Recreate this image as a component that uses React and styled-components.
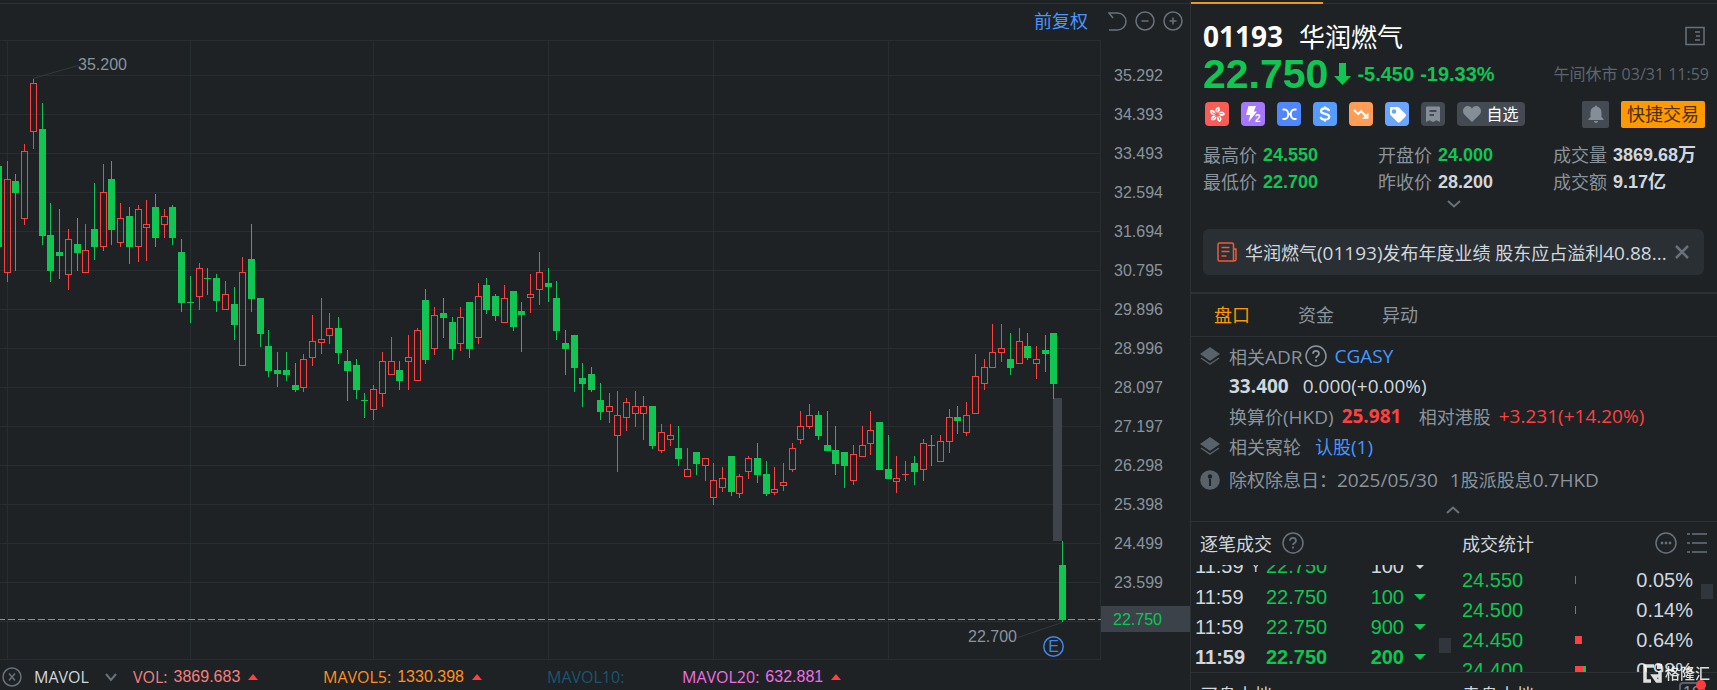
import React from 'react';
import styled, { createGlobalStyle } from 'styled-components';

const UP = '#ff4040';
const DOWN = '#10c551';
const LINE = '#2d3236';
const CJK = `'Open Sans', 'Noto Sans CJK SC', sans-serif`;
const NUM = `'Liberation Sans', 'Noto Sans CJK SC', sans-serif`;

const GlobalStyle = createGlobalStyle`
    * { box-sizing: border-box; }
    body {
        margin: 0;
        background: #1e2224;
        color: #d0d7df;
        font-family: ${CJK};
        font-size: 18px;
        overflow: hidden;
    }
    button, select { font: inherit; color: inherit; background: none; border: 0; padding: 0; margin: 0; cursor: pointer; }
    a { color: #4896ff; text-decoration: none; }
    svg { display: block; flex: none; }
`;

// x, high, body top, body bottom, low, u(p) / d(own)
const candles = [
    [-2, 166, 166, 247, 247, 'd'], [7, 161, 179, 273, 282, 'u'], [15, 174, 181, 193, 271, 'd'],
    [24, 144, 151, 219, 225, 'u'], [33, 79, 83, 132, 149, 'u'], [42, 103, 129, 236, 245, 'd'],
    [50, 203, 235, 271, 282, 'd'], [59, 209, 252, 256, 279, 'd'], [68, 229, 239, 275, 290, 'u'],
    [77, 218, 244, 253, 271, 'd'], [85, 224, 250, 273, 273, 'u'], [94, 183, 229, 247, 260, 'd'],
    [103, 164, 192, 247, 251, 'u'], [111, 161, 179, 230, 245, 'd'], [120, 203, 218, 243, 247, 'u'],
    [129, 207, 216, 247, 264, 'd'], [138, 205, 209, 247, 262, 'u'], [146, 200, 224, 228, 261, 'u'],
    [155, 194, 207, 238, 247, 'd'], [164, 209, 216, 225, 238, 'u'], [172, 205, 207, 238, 245, 'd'],
    [181, 239, 252, 303, 312, 'd'], [190, 276, 302, 303, 323, 'd'], [199, 263, 268, 297, 310, 'u'],
    [207, 268, 278, 279, 295, 'd'], [216, 274, 278, 301, 312, 'd'], [225, 281, 294, 310, 310, 'u'],
    [234, 287, 304, 325, 340, 'd'], [242, 257, 272, 366, 366, 'u'], [251, 224, 259, 299, 312, 'd'],
    [260, 298, 298, 334, 347, 'd'], [268, 330, 346, 371, 377, 'd'], [277, 352, 370, 374, 387, 'd'],
    [286, 352, 370, 375, 381, 'd'], [295, 363, 385, 390, 392, 'd'], [303, 354, 359, 388, 392, 'u'],
    [312, 315, 341, 358, 366, 'u'], [321, 298, 339, 343, 354, 'u'], [329, 313, 328, 336, 344, 'u'],
    [338, 317, 328, 353, 364, 'd'], [347, 350, 361, 371, 401, 'd'], [356, 359, 365, 390, 399, 'd'],
    [364, 393, 400, 401, 418, 'd'], [373, 385, 389, 410, 420, 'u'], [382, 352, 361, 394, 407, 'u'],
    [391, 337, 361, 375, 375, 'u'], [399, 361, 370, 381, 390, 'd'], [408, 335, 357, 362, 390, 'u'],
    [417, 328, 330, 381, 381, 'u'], [425, 289, 300, 360, 364, 'd'], [434, 307, 315, 349, 355, 'u'],
    [443, 298, 313, 318, 338, 'd'], [452, 317, 322, 349, 360, 'd'], [460, 307, 317, 344, 351, 'u'],
    [469, 302, 302, 349, 358, 'd'], [478, 283, 296, 338, 344, 'u'], [486, 278, 285, 310, 314, 'd'],
    [495, 294, 296, 316, 321, 'd'], [504, 285, 298, 323, 323, 'u'], [513, 291, 291, 327, 331, 'd'],
    [521, 302, 311, 315, 352, 'd'], [530, 274, 294, 298, 313, 'u'], [539, 252, 272, 290, 305, 'u'],
    [548, 268, 283, 287, 302, 'd'], [556, 281, 298, 331, 340, 'd'], [565, 330, 343, 349, 375, 'd'],
    [574, 335, 335, 368, 392, 'd'], [582, 363, 378, 384, 407, 'd'], [591, 367, 374, 390, 392, 'd'],
    [600, 383, 400, 412, 420, 'd'], [609, 393, 406, 412, 423, 'u'], [617, 391, 415, 436, 472, 'u'],
    [626, 398, 402, 418, 431, 'u'], [635, 391, 406, 414, 427, 'u'], [643, 396, 406, 414, 440, 'u'],
    [652, 406, 406, 446, 449, 'd'], [661, 424, 432, 451, 453, 'u'], [670, 424, 435, 440, 446, 'u'],
    [678, 426, 448, 459, 466, 'd'], [687, 448, 469, 477, 477, 'u'], [696, 452, 452, 464, 475, 'd'],
    [705, 458, 458, 466, 481, 'u'], [713, 463, 480, 498, 505, 'u'], [722, 467, 478, 488, 492, 'u'],
    [731, 456, 456, 492, 496, 'd'], [739, 474, 476, 494, 498, 'u'], [748, 456, 458, 472, 479, 'u'],
    [757, 443, 458, 475, 483, 'd'], [766, 461, 474, 494, 496, 'd'], [774, 467, 489, 493, 495, 'u'],
    [783, 463, 482, 486, 491, 'u'], [792, 443, 448, 470, 472, 'u'], [800, 411, 426, 440, 444, 'u'],
    [809, 404, 415, 427, 429, 'u'], [818, 411, 415, 436, 440, 'd'], [827, 411, 445, 451, 451, 'd'],
    [835, 426, 450, 464, 475, 'd'], [844, 452, 452, 466, 488, 'd'], [853, 445, 454, 481, 485, 'u'],
    [862, 426, 445, 457, 457, 'u'], [870, 411, 430, 444, 455, 'u'], [879, 422, 422, 470, 470, 'd'],
    [888, 435, 469, 479, 479, 'd'], [896, 456, 478, 482, 493, 'u'], [905, 461, 474, 475, 481, 'u'],
    [914, 456, 463, 472, 485, 'd'], [923, 439, 443, 470, 481, 'u'], [931, 435, 445, 446, 466, 'd'],
    [940, 435, 441, 462, 462, 'u'], [949, 409, 417, 442, 453, 'u'], [957, 406, 417, 421, 434, 'd'],
    [966, 402, 415, 433, 436, 'u'], [975, 354, 376, 414, 414, 'u'], [984, 359, 367, 384, 390, 'u'],
    [992, 324, 352, 368, 368, 'u'], [1001, 324, 348, 353, 362, 'u'], [1010, 333, 359, 368, 375, 'd'],
    [1019, 328, 341, 364, 364, 'u'], [1027, 333, 346, 358, 360, 'd'], [1036, 346, 359, 364, 379, 'u'],
    [1045, 335, 350, 354, 372, 'd'], [1053, 333, 333, 384, 399, 'd'], [1062, 541, 565, 620, 622, 'd'],
];

const axisPrices = [
    '35.292', '34.393', '33.493', '32.594', '31.694', '30.795', '29.896',
    '28.996', '28.097', '27.197', '26.298', '25.398', '24.499', '23.599',
];

const volumes = [
    { name: 'VOL:', value: '3869.683', color: '#f57f7f', width: 190 },
    { name: 'MAVOL5:', value: '1330.398', color: '#ff8f1f', width: 224 },
    { name: 'MAVOL10:', value: '', color: '#1b5570', width: 135 },
    { name: 'MAVOL20:', value: '632.881', color: '#ee6fe4', width: 190 },
];

const quotes = [
    { label: '最高价', value: '24.550', color: DOWN },
    { label: '开盘价', value: '24.000', color: DOWN },
    { label: '成交量', value: '3869.68万' },
    { label: '最低价', value: '22.700', color: DOWN },
    { label: '昨收价', value: '28.200' },
    { label: '成交额', value: '9.17亿' },
];

const ticks = [
    { time: '11:59', flag: 'Y', price: '22.750', size: '100', color: '#d0d7df' },
    { time: '11:59', price: '22.750', size: '100', color: DOWN },
    { time: '11:59', price: '22.750', size: '900', color: DOWN },
    { time: '11:59', price: '22.750', size: '200', color: DOWN, bold: true },
];

const levels = [
    { price: '24.550', parts: [[1, '#6b737c']], percent: '0.05%' },
    { price: '24.500', parts: [[1, UP]], percent: '0.14%' },
    { price: '24.450', parts: [[6, UP], [1, '#6b737c']], percent: '0.64%' },
    { price: '24.400', parts: [[8, UP], [3, DOWN]], percent: '0.98%' },
];

/* ---------- layout ---------- */

const Page = styled.div`
    display: grid;
    grid-template-columns: minmax(0, 1fr) 527px;
    height: 100vh;
    min-height: 0;
`;

const ChartPane = styled.main`
    display: flex;
    flex-direction: column;
    min-width: 0;
    min-height: 0;
    padding-top: 3px;
`;

const SidePane = styled.aside`
    display: flex;
    flex-direction: column;
    min-height: 0;
    overflow: hidden;
    border-left: 1px solid ${LINE};
`;

/* ---------- chart ---------- */

const Toolbar = styled.div`
    display: flex;
    flex: none;
    align-items: center;
    justify-content: flex-end;
    gap: 8px;
    height: 37px;
    padding: 0 7px 2px 0;
    border-top: 1px solid ${LINE};
    color: #69717b;
`;

const AdjustButton = styled.button`
    margin-right: 11px;
    padding-bottom: 2px;
    color: #4896ff;
`;

const ChartRow = styled.div`
    display: flex;
    flex: 1;
    min-height: 0;
`;

const Plot = styled.svg`
    flex: 1;
    min-width: 0;
    height: 100%;
    font-family: ${NUM};
    font-size: 16px;
`;

const Axis = styled.div`
    flex: none;
    width: 89px;
    padding-top: 16px;
    font: 16px/39px ${NUM};
    color: #8b939c;
`;

const AxisLabel = styled.div`
    padding-left: 13px;
`;

const LastPrice = styled.div`
    height: 26px;
    margin-top: 4px;
    padding-left: 12px;
    line-height: 28px;
    color: ${DOWN};
    background: #3b424a;
`;

const VolumeBar = styled.div`
    display: flex;
    flex: none;
    align-items: center;
    height: 30px;
    padding: 4px 0 0 2px;
    font-size: 16px;
    line-height: 24px;
    color: #69717b;
`;

const SelectBox = styled.label`
    position: relative;
    width: 99px;
    margin-left: 12px;

    select {
        width: 84px;
        appearance: none;
        color: #d0d7df;
    }

    svg {
        position: absolute;
        right: 16px;
        top: 6px;
        pointer-events: none;
    }
`;

const VolumeItem = styled.div`
    display: flex;
    align-items: center;
    gap: 6px;
    width: ${({ $width }) => $width}px;
    color: ${({ $color }) => $color};
`;

const VolumeValue = styled.span`
    margin-right: 2px;
    font-family: ${NUM};
`;

const Grid = () => (
    <g stroke="#282d30" shapeRendering="crispEdges">
        <path d="M0 40.5H1101" />
        {axisPrices.map((price, i) => <path d={`M0 ${75.5 + i * 39}H1101`} key={price} />)}
        <path d="M0 621.5H1101M0 659.5H1101" />
        {[7, 190, 373, 548, 713, 888, 1100].map(x => <path d={`M${x + 0.5} 40V660`} key={x} />)}
    </g>
);

const Candle = ({ candle }) => {
    const [x, high, top, bottom, low, dir] = candle;
    const color = dir === 'u' ? UP : DOWN;
    const hollow = dir === 'u' && bottom - top > 1;

    return (
        <g fill={color}>
            {top > high && <rect x={x} y={high} width="1" height={top - high} />}
            {low > bottom && <rect x={x} y={bottom} width="1" height={low - bottom} />}
            {hollow
                ? <rect x={x - 2.5} y={top + 0.5} width="6" height={bottom - top - 1} fill="none" stroke={color} />
                : <rect x={x - 3} y={top} width="7" height={bottom - top} />}
        </g>
    );
};

const CandleChart = () => (
    <Plot viewBox="0 40 1101 620" preserveAspectRatio="xMaxYMin slice" role="img" aria-label="K线图">
        <Grid />
        <rect x="1053" y="398" width="9" height="143" fill="#3f434b" />
        <path d="M-2 619.5H1101" stroke="#ab8a5c" strokeDasharray="7 3" />
        {candles.map(candle => <Candle candle={candle} key={candle[0]} />)}
        <path d="M33 78.5L78 65.5M1018 637.5L1062 622.5" stroke="#33383c" />
        <text x="78" y="70" fill="#8b939c">35.200</text>
        <text x="968" y="642" fill="#8b939c">22.700</text>
        <circle cx="1053.5" cy="646.5" r="9.75" fill="none" stroke="#3f86e6" strokeWidth="1.5" />
        <text x="1053.5" y="652" fill="#3f86e6" textAnchor="middle">E</text>
    </Plot>
);

/* ---------- icons ---------- */

const LineIcon = ({ size = 20, box = 20, width = 1.5, children }) => (
    <svg width={size} height={size} viewBox={`0 0 ${box} ${box}`} fill="none" stroke="currentColor" strokeWidth={width}>
        {children}
    </svg>
);

const UndoIcon = () => (
    <LineIcon>
        <path d="M6 7L2 2h8.500a8.500 8.500 0 0 1 0 17H2" />
    </LineIcon>
);

const MinusIcon = () => (
    <LineIcon><circle cx="10" cy="10" r="9" /><path d="M6.500 10h7" /></LineIcon>
);

const PlusIcon = () => (
    <LineIcon><circle cx="10" cy="10" r="9" /><path d="M6.500 10h7M10 6.500v7" /></LineIcon>
);

const CloseCircleIcon = () => (
    <LineIcon><circle cx="10" cy="10" r="9" /><path d="M7 6.500l6 7M13 6.500l-6 7" /></LineIcon>
);

const HelpIcon = () => (
    <LineIcon size={22} box={22}>
        <circle cx="11" cy="11" r="10" />
        <path d="M8 8.800c0-4 6-4 6 0 0 2.200-3 2-3 4.200M11 14.500v2" strokeWidth="1.800" />
    </LineIcon>
);

const Chevron = ({ up }) => (
    <svg width="14" height="8" viewBox="0 0 14 8" fill="none" stroke="#69717b" strokeWidth="2">
        <path d={up ? 'M1 7l6-5.500L13 7' : 'M1 1l6 5.500L13 1'} />
    </svg>
);

const Triangle = ({ up, color }) => (
    <svg width={up ? 10 : 12} height="6" viewBox="0 0 12 6" preserveAspectRatio="none" fill={color}>
        <path d={up ? 'M0 6L6 0l6 6z' : 'M0 0h12L6 6z'} />
    </svg>
);

const LayersIcon = () => (
    <svg width="20" height="20" viewBox="0 0 20 20" fill="#59616a">
        <path d="M10 1l10 7-10 7L0 8z" />
        <path d="M1 12l9 6 9-6" fill="none" stroke="#59616a" strokeWidth="1.500" />
    </svg>
);

const InfoIcon = () => (
    <svg width="20" height="20" viewBox="0 0 20 20">
        <circle cx="10" cy="10" r="9.800" fill="#59616a" />
        <circle cx="10" cy="6.500" r="2.200" fill="#1e2224" />
        <path d="M10 9v7" stroke="#1e2224" strokeWidth="2" />
    </svg>
);

const BauhiniaIcon = () => (
    <svg width="24" height="24" viewBox="0 0 24 24" fill="#fff">
        {[0, 72, 144, 216, 288].map(angle => (
            <g transform={`rotate(${angle + 8} 12 12.500)`} key={angle}>
                <path d="M12 10.800C8.200 9.500 9.500 5.500 12.800 4.500 15.200 7 14.500 9.500 12 10.800z" />
                <path d="M12 10.500c-.8-1.500-.6-2.800.4-3.900" fill="none" stroke="#f95c57" strokeWidth=".8" />
            </g>
        ))}
    </svg>
);

const LevelTwoIcon = () => (
    <svg width="24" height="24" viewBox="0 0 24 24" fill="#fff">
        <path d="M7.500 4h7.500l-2.200 5.500H16L7.500 20l1.700-7H5z" />
        <text x="14" y="20" fontFamily="Liberation Sans, sans-serif" fontWeight="bold" fontSize="10">2</text>
    </svg>
);

const ShuffleIcon = () => (
    <LineIcon size={24} box={24} width={2}>
        <path d="M5.500 7.500h2c5 0 5 9.500 0 9.500h-2M19.500 7.500h-2c-5 0-5 9.500 0 9.500h2" />
        <path d="M11 12.200h3" />
    </LineIcon>
);

const DollarIcon = () => (
    <LineIcon size={24} box={24} width={2.2}>
        <path d="M16 9.200C15.500 5.500 8 5.500 8 9.200c0 3.600 8.300 1.800 8.300 5.600 0 3.800-8.300 3.600-8.600 0M12 4.500V7M12 17v2.500" />
    </LineIcon>
);

const TrendIcon = () => (
    <LineIcon size={24} box={24} width={2.2}>
        <path d="M5 8l4.200 4 3-2.800 5.300 5.500" />
        <path d="M19.500 10.500v6.200h-6.500z" fill="currentColor" stroke="none" />
    </LineIcon>
);

const TagIcon = () => (
    <svg width="24" height="24" viewBox="0 0 24 24" fill="#fff" fillRule="evenodd">
        <path d="M6 5h6.500c.7 0 1.200.2 1.700.7l6.300 6.300c.8.8.8 1.600 0 2.400L15 20c-.8.800-1.800.8-2.600 0L5.700 13.300c-.5-.5-.7-1-.7-1.700V6c0-.6.400-1 1-1zM9 7.200a2.300 2.300 0 1 0 0 4.600 2.300 2.300 0 0 0 0-4.600z" />
    </svg>
);

const NoteIcon = () => (
    <svg width="24" height="24" viewBox="0 0 24 24" fill="#858d96">
        <path d="M6 4.500h12a1 1 0 0 1 1 1V20l-3.500-1.800L12 20l-3.500-1.800L5 20V5.500a1 1 0 0 1 1-1z" />
        <path d="M8.500 9h7M8.500 13h4.500" stroke="#434a52" strokeWidth="1.800" />
    </svg>
);

const HeartIcon = () => (
    <svg width="18" height="16" viewBox="0 0 18 16" fill="#858d96">
        <path d="M9 16L1.500 8.800C-1.800 4.800 1 0 4.800 0 6.700 0 8.200 1 9 2.500 9.800 1 11.300 0 13.200 0 17 0 19.800 4.800 16.500 8.800z" />
    </svg>
);

const BellIcon = () => (
    <svg width="16" height="18" viewBox="0 0 16 18" fill="#858d96">
        <path d="M8 0l1.200 1.800C12 2.500 13.500 4.500 13.500 7.500V12l2 2v1H.5v-1l2-2V7.500c0-3 1.500-5 4.300-5.700zM5.800 16h4.400c-.4 1.300-1.200 2-2.200 2s-1.800-.7-2.200-2z" />
    </svg>
);

const PanelIcon = () => (
    <LineIcon>
        <rect x="1" y="1.500" width="18" height="17" />
        <path d="M10 6h5M11 10h4M10 14h5" />
    </LineIcon>
);

const NewsIcon = () => (
    <svg width="20" height="20" viewBox="0 0 20 20" fill="none" stroke="#f0593a" strokeWidth="1.500">
        <path d="M16.500 19H2.500A1.500 1.500 0 0 1 1 17.500v-15A1.500 1.500 0 0 1 2.500 1h12.500A1.500 1.500 0 0 1 16.500 2.500V19zM16.500 7H19v10.500a1.200 1.200 0 0 1-2.500 0M4.500 5.500h8M4.500 9.500h8M4.500 14h5" />
    </svg>
);

const MoreIcon = () => (
    <LineIcon size={22} box={22}>
        <circle cx="11" cy="11" r="10" />
        <path d="M5.800 11h2.400M9.800 11h2.400M13.800 11h2.400" strokeWidth="2.400" />
    </LineIcon>
);

const ListIcon = () => (
    <LineIcon>
        <path d="M0 1h3M5 1h15M0 10h3M5 10h15M0 19h3M5 19h15" />
    </LineIcon>
);

/* ---------- quote header ---------- */

const TabStrip = styled.div`
    flex: none;
    height: 4px;
    border-bottom: 1px solid ${LINE};

    &::before {
        content: '';
        display: block;
        width: 132px;
        height: 4px;
        background: linear-gradient(transparent 50%, #ee9a16 50%);
    }
`;

const QuoteHead = styled.section`
    flex: none;
    padding: 14px 12px 0 12px;
`;

const Row = styled.div`
    display: flex;
    align-items: center;
    justify-content: space-between;
`;

const TitleRow = styled(Row)`
    height: 36px;
`;

const Title = styled.h1`
    display: flex;
    align-items: baseline;
    gap: 16px;
    margin: 0;
    font-size: 26px;
    font-weight: 400;
    line-height: 36px;
    color: #fff;

    strong { font-size: 28px; }
`;

const IconButton = styled.button`
    display: flex;
    color: #69717b;
`;

const PriceRow = styled(Row)`
    height: 40px;
    font-family: ${NUM};
    font-weight: bold;
    font-size: 20px;
    color: ${DOWN};
`;

const PriceGroup = styled.div`
    display: flex;
    align-items: center;
    gap: 6px;
`;

const BigPrice = styled.span`
    font-size: 41px;
    line-height: 40px;
`;

const MarketTime = styled.span`
    margin-right: -4px;
    font: 16px/24px ${CJK};
    white-space: pre;
    color: #5d656f;
`;

const BadgeRow = styled(Row)`
    height: 28px;
    margin-top: 6px;
    padding-left: 2px;
`;

const Badges = styled.div`
    display: flex;
    gap: 12px;
`;

const Badge = styled.button`
    display: flex;
    width: 24px;
    height: 24px;
    border-radius: 4px;
    color: #fff;
    background: ${({ $bg }) => $bg};
`;

const FollowButton = styled.button`
    display: flex;
    align-items: center;
    justify-content: center;
    gap: 5px;
    width: 68px;
    height: 24px;
    border-radius: 4px;
    font-size: 16px;
    line-height: 24px;
    color: #fff;
    background: #434a52;
`;

const BellButton = styled.button`
    display: grid;
    place-items: center;
    width: 27px;
    height: 27px;
    border-radius: 2px;
    background: #434a52;
`;

const TradeButton = styled.button`
    width: 84px;
    height: 27px;
    border-radius: 2px;
    line-height: 27px;
    color: #4a3007;
    background: #ff9900;
`;

const QuoteGrid = styled.dl`
    display: grid;
    grid-template-columns: 175px 175px 1fr;
    margin: 14px 0 0;
    line-height: 27px;

    div {
        display: flex;
        gap: 6px;
        height: 27px;
        white-space: nowrap;
    }
    dt { color: #8b939c; }
    dd { margin: 0; font-family: ${NUM}; font-weight: bold; }
`;

const QuoteValue = styled.dd`
    color: ${({ $color }) => $color || '#d0d7df'};
`;

const ToggleRow = styled.button`
    display: flex;
    flex: none;
    align-items: center;
    justify-content: center;
    width: 100%;
    height: ${({ $height }) => $height}px;
`;

const News = styled.div`
    display: flex;
    align-items: center;
    gap: 8px;
    height: 46px;
    margin: 18px 1px 17px 0;
    padding: 0 15px 0 14px;
    border-radius: 6px;
    background: #2a2f33;

    a {
        flex: 1;
        min-width: 0;
        overflow: hidden;
        text-overflow: ellipsis;
        white-space: nowrap;
        color: #d0d7df;
    }
`;

/* ---------- order book ---------- */

const Tabs = styled.nav`
    display: flex;
    flex: none;
    gap: 48px;
    height: 45px;
    padding-left: 23px;
    border-top: 2px solid ${LINE};
    border-bottom: 1px solid ${LINE};
`;

const Tab = styled.button`
    width: 36px;
    padding-bottom: 3px;
    white-space: nowrap;
    color: ${({ $active }) => ($active ? '#ff9900' : '#8b939c')};
`;

const Related = styled.section`
    flex: none;
    padding: 4px 11px 0 9px;
    color: #8b939c;
`;

const RelatedRow = styled.div`
    display: grid;
    grid-template-columns: 29px 1fr;
    align-items: center;
    height: ${({ $tall }) => ($tall ? 37 : 30)}px;
`;

const RelatedText = styled.div`
    display: flex;
    grid-column: 2;
    align-items: center;
    gap: ${({ $gap }) => $gap}px;
    white-space: pre;
`;

const Figure = styled.span`
    font-size: 19px;
    font-weight: ${({ $bold }) => ($bold ? 700 : 400)};
    color: ${({ $color }) => $color || 'inherit'};
`;

/* ---------- trades ---------- */

const Trades = styled.section`
    display: grid;
    flex: none;
    grid-template-columns: 262px 1fr;
    border-top: 1px solid ${LINE};
    border-bottom: 1px solid ${LINE};
`;

const TradeTitle = styled.div`
    display: flex;
    align-items: center;
    gap: 10px;
    height: 43px;
    padding: 0 10px 1px 9px;

    h2 {
        flex: ${({ $grow }) => ($grow ? 1 : 'none')};
        margin: 0;
        font-size: 18px;
        font-weight: 400;
    }
`;

const Viewport = styled.div`
    display: flex;
    align-items: ${({ $end }) => ($end ? 'flex-end' : 'flex-start')};
    height: 107px;
    overflow: hidden;
`;

const Table = styled.table`
    flex: none;
    border-collapse: collapse;
    table-layout: fixed;
    font: 20px/30px ${NUM};

    td { height: 30px; padding: 0; }
`;

const TickTable = styled(Table)`
    width: 236px;
    margin-left: 4px;
`;

const TickRow = styled.tr`
    font-weight: ${({ $bold }) => ($bold ? 700 : 400)};
`;

const Cell = styled.td`
    width: ${({ $width }) => $width}px;
    text-align: ${({ $align }) => $align || 'left'};
    color: ${({ $color }) => $color || 'inherit'};

    small { font-size: 14px; }
    svg { margin-left: 10px; }
`;

const LevelTable = styled(Table)`
    width: 231px;
    margin-left: 9px;
`;

const Bar = styled.div`
    display: flex;

    i { height: 8px; }
`;

const Thumb = styled.div`
    align-self: flex-start;
    width: 12px;
    height: 15px;
    margin: ${({ $top }) => $top}px 0 0 8px;
    background: #31363d;
`;

const Book = styled.section`
    display: grid;
    flex: none;
    grid-template-columns: 262px 1fr;
    padding-top: 7px;

    h2 {
        margin: 0;
        padding-left: 9px;
        font-size: 18px;
        font-weight: 400;
        line-height: 30px;
    }
`;

const BookHead = styled.div`
    position: relative;
`;

const DepthButton = styled.button`
    position: absolute;
    right: 12px;
    top: 2px;
    width: 26px;
    height: 22px;
    border: 2px solid #59616a;
    border-radius: 4px;
    font: 16px/18px ${NUM};
    color: #8b939c;

    &::after {
        content: '';
        position: absolute;
        right: -3px;
        top: -4px;
        width: 10px;
        height: 10px;
        border-radius: 50%;
        background: #ff3b3b;
    }
`;

const Watermark = styled.div`
    position: fixed;
    right: 7px;
    bottom: 5px;
    display: flex;
    align-items: center;
    gap: 3px;
    font-size: 15px;
    font-weight: 500;
    line-height: 24px;
    color: #fff;
    opacity: 0.85;
`;

const badges = [
    { name: '港股', bg: '#f95c57', Icon: BauhiniaIcon },
    { name: 'Level 2', bg: '#a578fb', Icon: LevelTwoIcon },
    { name: '关联', bg: '#5087ff', Icon: ShuffleIcon },
    { name: '融资', bg: '#569bff', Icon: DollarIcon },
    { name: '沽空', bg: '#ff9c56', Icon: TrendIcon },
    { name: '标签', bg: '#6aa6ff', Icon: TagIcon },
    { name: '笔记', bg: '#434a52', Icon: NoteIcon },
];

const Header = () => (
    <QuoteHead>
        <TitleRow>
            <Title><strong>01193</strong>华润燃气</Title>
            <IconButton aria-label="面板"><PanelIcon /></IconButton>
        </TitleRow>
        <PriceRow>
            <PriceGroup>
                <BigPrice>22.750</BigPrice>
                <svg width="17" height="22" viewBox="0 0 17 22" fill={DOWN}>
                    <path d="M5 0h7v13h5l-8.500 9L0 13h5z" />
                </svg>
                <span>-5.450</span>
                <span>-19.33%</span>
            </PriceGroup>
            <MarketTime>午间休市 03/31 11:59</MarketTime>
        </PriceRow>
        <BadgeRow>
            <Badges>
                {badges.map(({ name, bg, Icon }) => (
                    <Badge $bg={bg} aria-label={name} key={name}><Icon /></Badge>
                ))}
                <FollowButton><HeartIcon />自选</FollowButton>
            </Badges>
            <Badges>
                <BellButton aria-label="提醒"><BellIcon /></BellButton>
                <TradeButton>快捷交易</TradeButton>
            </Badges>
        </BadgeRow>
        <QuoteGrid>
            {quotes.map(({ label, value, color }) => (
                <div key={label}>
                    <dt>{label}</dt>
                    <QuoteValue $color={color}>{value}</QuoteValue>
                </div>
            ))}
        </QuoteGrid>
        <ToggleRow $height={15} aria-label="展开"><Chevron /></ToggleRow>
        <News>
            <NewsIcon />
            <a href="#news">
                华润燃气<Figure>(01193)</Figure>发布年度业绩 股东应占溢利<Figure>40.88...</Figure>
            </a>
            <IconButton aria-label="关闭">
                <LineIcon size={14} box={14} width={2.5}><path d="M1 1l12 12M13 1L1 13" /></LineIcon>
            </IconButton>
        </News>
    </QuoteHead>
);

const RelatedInfo = () => (
    <Related>
        <RelatedRow>
            <LayersIcon />
            <RelatedText $gap={8}>
                <RelatedText $gap={2}>
                    <span>相关<Figure>ADR</Figure></span>
                    <HelpIcon />
                </RelatedText>
                <a href="#adr"><Figure>CGASY</Figure></a>
            </RelatedText>
        </RelatedRow>
        <RelatedRow>
            <RelatedText $gap={14}>
                <Figure $bold $color="#d0d7df">33.400</Figure>
                <Figure $color="#d0d7df">0.000(+0.00%)</Figure>
            </RelatedText>
        </RelatedRow>
        <RelatedRow>
            <RelatedText $gap={8}>
                <span>换算价<Figure>(HKD)</Figure></span>
                <Figure $bold $color={UP}>25.981</Figure>
                <span>{'  相对港股'}</span>
                <Figure $color={UP}>+3.231(+14.20%)</Figure>
            </RelatedText>
        </RelatedRow>
        <RelatedRow>
            <LayersIcon />
            <RelatedText $gap={14}>
                相关窝轮<a href="#warrants">认股<Figure>(1)</Figure></a>
            </RelatedText>
        </RelatedRow>
        <RelatedRow $tall>
            <InfoIcon />
            <RelatedText $gap={12}>
                <span>除权除息日：<Figure>2025/05/30</Figure></span>
                <span><Figure>1</Figure>股派股息<Figure>0.7HKD</Figure></span>
            </RelatedText>
        </RelatedRow>
        <ToggleRow $height={23} aria-label="收起"><Chevron up /></ToggleRow>
    </Related>
);

const TradeLists = () => (
    <Trades>
        <div>
            <TradeTitle><h2>逐笔成交</h2><IconButton aria-label="帮助"><HelpIcon /></IconButton></TradeTitle>
            <Viewport $end>
                <TickTable>
                    <tbody>
                        {ticks.map(({ time, flag, price, size, color, bold }, i) => (
                            <TickRow $bold={bold} key={i}>
                                <Cell $width={56}>{time}</Cell>
                                <Cell $width={15}><small>{flag}</small></Cell>
                                <Cell $width={72} $color={DOWN}>{price}</Cell>
                                <Cell $width={66} $align="right" $color={color}>{size}</Cell>
                                <Cell $width={27}><Triangle color={color} /></Cell>
                            </TickRow>
                        ))}
                    </tbody>
                </TickTable>
                <Thumb $top={73} />
            </Viewport>
        </div>
        <div>
            <TradeTitle $grow>
                <h2>成交统计</h2>
                <IconButton aria-label="更多"><MoreIcon /></IconButton>
                <IconButton aria-label="列表"><ListIcon /></IconButton>
            </TradeTitle>
            <Viewport>
                <LevelTable>
                    <tbody>
                        {levels.map(({ price, parts, percent }) => (
                            <tr key={price}>
                                <Cell $width={113} $color={DOWN}>{price}</Cell>
                                <Cell $width={38}>
                                    <Bar>
                                        {parts.map(([width, background]) => (
                                            <i style={{ width, background }} key={background} />
                                        ))}
                                    </Bar>
                                </Cell>
                                <Cell $width={80} $align="right">{percent}</Cell>
                            </tr>
                        ))}
                    </tbody>
                </LevelTable>
                <Thumb $top={19} />
            </Viewport>
        </div>
    </Trades>
);

const App = () => {
    return (
        <>
            <GlobalStyle />
            <Page>
                <ChartPane>
                    <Toolbar>
                        <AdjustButton>前复权</AdjustButton>
                        <IconButton aria-label="撤销"><UndoIcon /></IconButton>
                        <IconButton aria-label="缩小"><MinusIcon /></IconButton>
                        <IconButton aria-label="放大"><PlusIcon /></IconButton>
                    </Toolbar>
                    <ChartRow>
                        <CandleChart />
                        <Axis>
                            {axisPrices.map(price => <AxisLabel key={price}>{price}</AxisLabel>)}
                            <LastPrice>22.750</LastPrice>
                        </Axis>
                    </ChartRow>
                    <VolumeBar>
                        <IconButton aria-label="移除指标"><CloseCircleIcon /></IconButton>
                        <SelectBox>
                            <select aria-label="指标" defaultValue="MAVOL">
                                <option>MAVOL</option>
                            </select>
                            <LineIcon size={12} box={12} width={2}><path d="M1 3l5 6 5-6" /></LineIcon>
                        </SelectBox>
                        {volumes.map(({ name, value, color, width }) => (
                            <VolumeItem $width={width} $color={color} key={name}>
                                {name}
                                {value && <><VolumeValue>{value}</VolumeValue><Triangle up color={UP} /></>}
                            </VolumeItem>
                        ))}
                    </VolumeBar>
                </ChartPane>
                <SidePane>
                    <TabStrip />
                    <Header />
                    <Tabs>
                        <Tab $active>盘口</Tab>
                        <Tab>资金</Tab>
                        <Tab>异动</Tab>
                    </Tabs>
                    <RelatedInfo />
                    <TradeLists />
                    <Book>
                        <h2>买盘十档</h2>
                        <BookHead>
                            <h2>卖盘十档</h2>
                            <DepthButton>10</DepthButton>
                        </BookHead>
                    </Book>
                </SidePane>
            </Page>
            <Watermark>
                <svg width="19" height="19" viewBox="0 0 19 19" fill="none" stroke="#fff" strokeWidth="3.500">
                    <path d="M11 2H2v15h6M17 7v10h-3l-3.500-5H17" />
                    <path d="M14 0h5v5h-5z" fill="#fff" stroke="none" />
                </svg>
                格隆汇
            </Watermark>
        </>
    );
};

export default App;
